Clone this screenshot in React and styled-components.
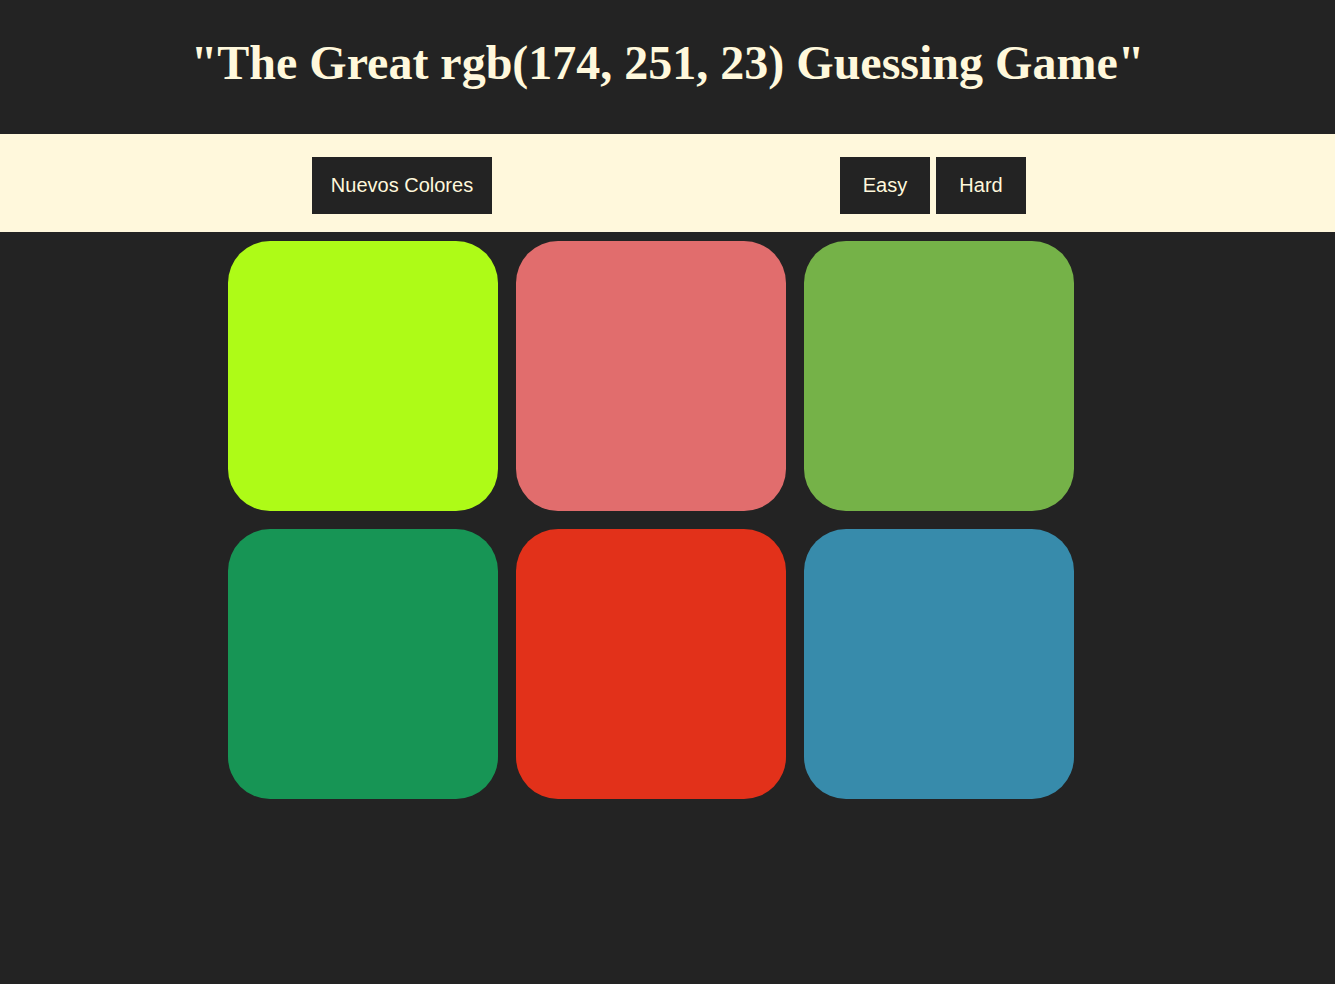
import React from "react";
import styled, { createGlobalStyle } from "styled-components";

const Global = createGlobalStyle`
  html, body { margin: 0; padding: 0; background: #232323; }
  body { font-family: "Liberation Sans", Arial, sans-serif; }
`;

const Header = styled.header`
  height: 134px;
  display: flex;
  align-items: center;
  justify-content: center;
  background: #232323;
`;

const Title = styled.h1`
  margin: 0;
  padding-bottom: 10px;
  font-family: "Liberation Serif", "Times New Roman", serif;
  font-weight: bold;
  font-size: 48px;
  color: #fff8dc;
  text-align: center;
`;

const Stripe = styled.div`
  height: 98px;
  box-sizing: border-box;
  padding-top: 5px;
  background: #fff8dc;
  display: flex;
  align-items: center;
`;

const StripeInner = styled.div`
  width: 714px;
  margin-left: 312px;
  display: flex;
  justify-content: space-between;
  align-items: center;
`;

const Group = styled.div`
  display: flex;
  gap: 6px;
`;

const Button = styled.button`
  width: ${(p) => p.$w}px;
  height: 57px;
  border: none;
  background: #232323;
  color: #fff8dc;
  font-family: "Liberation Sans", Arial, sans-serif;
  font-size: 20px;
  padding: 0;
  cursor: pointer;
`;

const Grid = styled.div`
  margin: 9px 0 0 228px;
  display: grid;
  grid-template-columns: repeat(3, 270px);
  gap: 18px;
`;

const Square = styled.div`
  width: 270px;
  height: 270px;
  border-radius: 42px;
  background: ${(p) => p.$c};
`;

const colors = [
  "rgb(174, 251, 23)",
  "rgb(225, 109, 109)",
  "rgb(117, 178, 72)",
  "rgb(23, 149, 85)",
  "rgb(226, 49, 26)",
  "rgb(55, 139, 171)",
];

export default function App() {
  return (
    <>
      <Global />
      <Header>
        <Title>"The Great rgb(174, 251, 23) Guessing Game"</Title>
      </Header>
      <Stripe>
        <StripeInner>
          <Button $w={180}>Nuevos Colores</Button>
          <Group>
            <Button $w={90}>Easy</Button>
            <Button $w={90}>Hard</Button>
          </Group>
        </StripeInner>
      </Stripe>
      <Grid>
        {colors.map((c, i) => (
          <Square key={i} $c={c} />
        ))}
      </Grid>
    </>
  );
}
